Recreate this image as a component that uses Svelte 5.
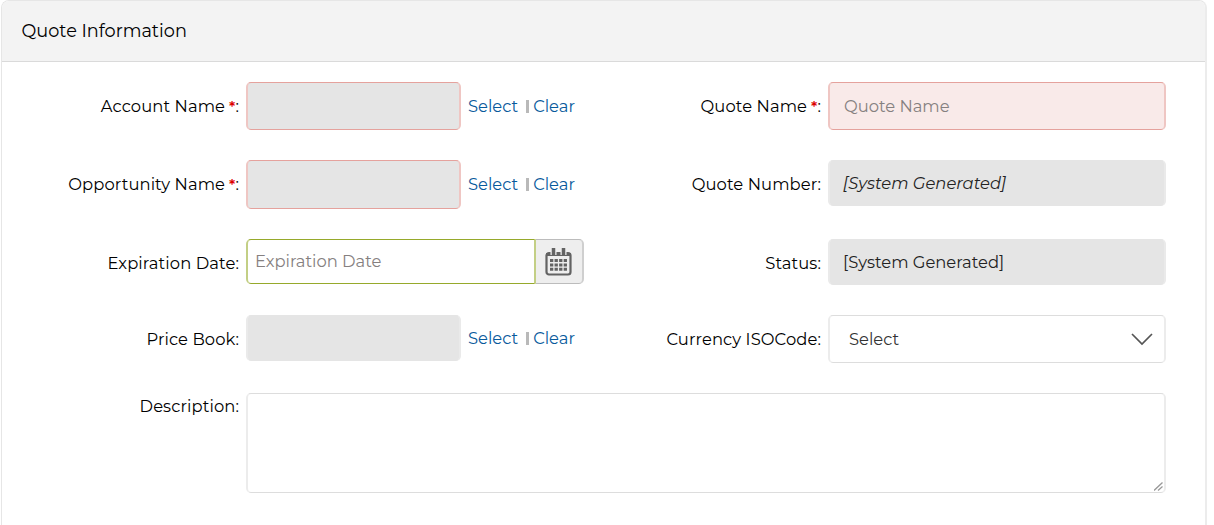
<script>
    let quoteName = '';
    let expirationDate = '';
    let description = '';
</script>

<style>
    :global(body){
        margin: 0;
        background: #fff;
    }

    .panel{
        box-sizing: border-box;
        width: 1206px;
        height: 525px;
        margin-left: 1px;
        border: 1px solid #e6e6e6;
        border-right: 2px solid #ececec;
        border-bottom: none;
        border-radius: 8px 8px 0 0;
        overflow: hidden;
        font-family: Montserrat, Inter, sans-serif;
        font-size: 16.35px;
        line-height: 20px;
        color: #000;
    }

    .panel-header{
        box-sizing: border-box;
        height: 61px;
        padding: 20px 19.5px;
        background: #f3f3f3;
        border-bottom: 1px solid #dadada;
    }

    h2{
        margin: 0;
        font-size: 17.7px;
        line-height: 20px;
        font-weight: 400;
    }

    .form{
        display: grid;
        grid-template-columns: 237px 338px 230px 338px;
        grid-template-rows: 78px 79px 76px 78px 100px;
        column-gap: 7px;
        padding-top: 20px;
    }

    label, .label{
        padding-top: 14px;
        text-align: right;
        letter-spacing: 0.1px;
        white-space: nowrap;
    }

    .label-top{
        padding-top: 3px;
    }

    .required{
        color: #d00;
        font-size: 15px;
        font-weight: 600;
        line-height: 1;
        margin-left: 4px;
    }

    .control{
        display: flex;
        align-items: flex-start;
    }

    input, .select, textarea, .readonly{
        box-sizing: border-box;
        width: 338px;
        height: 48px;
        margin: 0;
        border: solid;
        border-width: 1px 2px;
        border-color: #ddd #ececec;
        border-radius: 5px;
        font: inherit;
        outline: none;
    }

    ::placeholder{
        color: #858080;
        opacity: 1;
    }

    .readonly{
        height: 46px;
        padding: 12px 13px;
        background: #e5e5e5;
        border-color: #e5e5e5 #eaeaea;
        color: #222;
    }

    .italic{
        font-style: italic;
    }

    .lookup{
        width: 215px;
    }

    .error{
        height: 48px;
        border-color: #e5a29d #efc6c3;
    }

    .tall{
        height: 49px;
    }

    .quote-name{
        padding: 0 14px;
        background: #f9eae9;
    }

    .links{
        display: flex;
        align-items: center;
        margin: 14px 0 0 7px;
    }

    .links-up{
        margin-top: 13px;
    }

    .links a{
        color: #085a9c;
        text-decoration: none;
    }

    .divider{
        width: 3px;
        height: 13px;
        margin: 0 4px 0 8px;
        background: #b9b9b9;
    }

    .date{
        width: 290px;
        height: 45px;
        padding: 0 7px 2px;
        border-color: #96a92b #c3cf85;
        border-radius: 5px 0 0 5px;
    }

    .calendar{
        box-sizing: border-box;
        width: 48px;
        height: 45px;
        padding: 0 0 0 9px;
        border: 1px solid #bcbcbc;
        border-left: none;
        border-right: 2px solid #cfcfcf;
        border-radius: 0 5px 5px 0;
        background: #eee;
        text-align: left;
    }

    .calendar svg, .select svg{
        display: block;
    }

    .select{
        display: flex;
        align-items: center;
        justify-content: space-between;
        padding: 0 11px 0 19px;
        background: #fff;
        color: #333;
        text-align: left;
    }

    .description{
        grid-column: 2 / 5;
        position: relative;
        width: 920px;
    }

    textarea{
        display: block;
        width: 920px;
        height: 100px;
        resize: none;
    }

    .grip{
        position: absolute;
        right: 3px;
        bottom: 2px;
        pointer-events: none;
    }
</style>

<div class="panel">
    <div class="panel-header">
        <h2>Quote Information</h2>
    </div>

    <div class="form">
        <div class="label">Account Name<span class="required">*</span>:</div>
        <div class="control">
            <div class="readonly lookup error"></div>
            <div class="links"><a href="#select">Select</a><span class="divider"></span><a href="#clear">Clear</a></div>
        </div>
        <label for="quote-name">Quote Name<span class="required">*</span>:</label>
        <div class="control">
            <input id="quote-name" class="error quote-name" bind:value={quoteName} placeholder="Quote Name"/>
        </div>

        <div class="label">Opportunity Name<span class="required">*</span>:</div>
        <div class="control">
            <div class="readonly lookup error tall"></div>
            <div class="links"><a href="#select">Select</a><span class="divider"></span><a href="#clear">Clear</a></div>
        </div>
        <div class="label">Quote Number:</div>
        <div class="control">
            <div class="readonly italic">[System Generated]</div>
        </div>

        <label for="expiration">Expiration Date:</label>
        <div class="control">
            <input id="expiration" class="date" bind:value={expirationDate} placeholder="Expiration Date"/>
            <button class="calendar" type="button" aria-label="Pick a date">
                <svg width="27" height="28" viewBox="0 0 27 28">
                    <rect x="1.500" y="5" width="24" height="21.500" rx="2.500" fill="none" stroke="#636363" stroke-width="2.200"/>
                    <path d="M1 5h25v3H1z" fill="#636363"/>
                    <path d="M8.500 1v6M18.500 1v6" stroke="#eee" stroke-width="6"/>
                    <path d="M8.500 0v8M18.500 0v8" stroke="#636363" stroke-width="3.500"/>
                    <path d="M5 12.500h17M5 16.900h17M5 21.300h17" stroke="#636363" stroke-width="3" stroke-dasharray="3.300 1.260"/>
                </svg>
            </button>
        </div>
        <div class="label">Status:</div>
        <div class="control">
            <div class="readonly">[System Generated]</div>
        </div>

        <div class="label">Price Book:</div>
        <div class="control">
            <div class="readonly lookup"></div>
            <div class="links links-up"><a href="#select">Select</a><span class="divider"></span><a href="#clear">Clear</a></div>
        </div>
        <div class="label">Currency ISOCode:</div>
        <div class="control">
            <button class="select" type="button">
                <span>Select</span>
                <svg width="22" height="13" viewBox="0 0 22 13">
                    <path d="M1 1l10 10 10-10" fill="none" stroke="#555" stroke-width="1.700"/>
                </svg>
            </button>
        </div>

        <label class="label-top" for="description">Description:</label>
        <div class="description">
            <textarea id="description" bind:value={description}></textarea>
            <svg class="grip" width="9" height="9" viewBox="0 0 9 9">
                <path d="M0 8.500L8.500 0.500M4 8.500l4.500-4" fill="none" stroke="#999" stroke-width="1.300"/>
            </svg>
        </div>
    </div>
</div>
